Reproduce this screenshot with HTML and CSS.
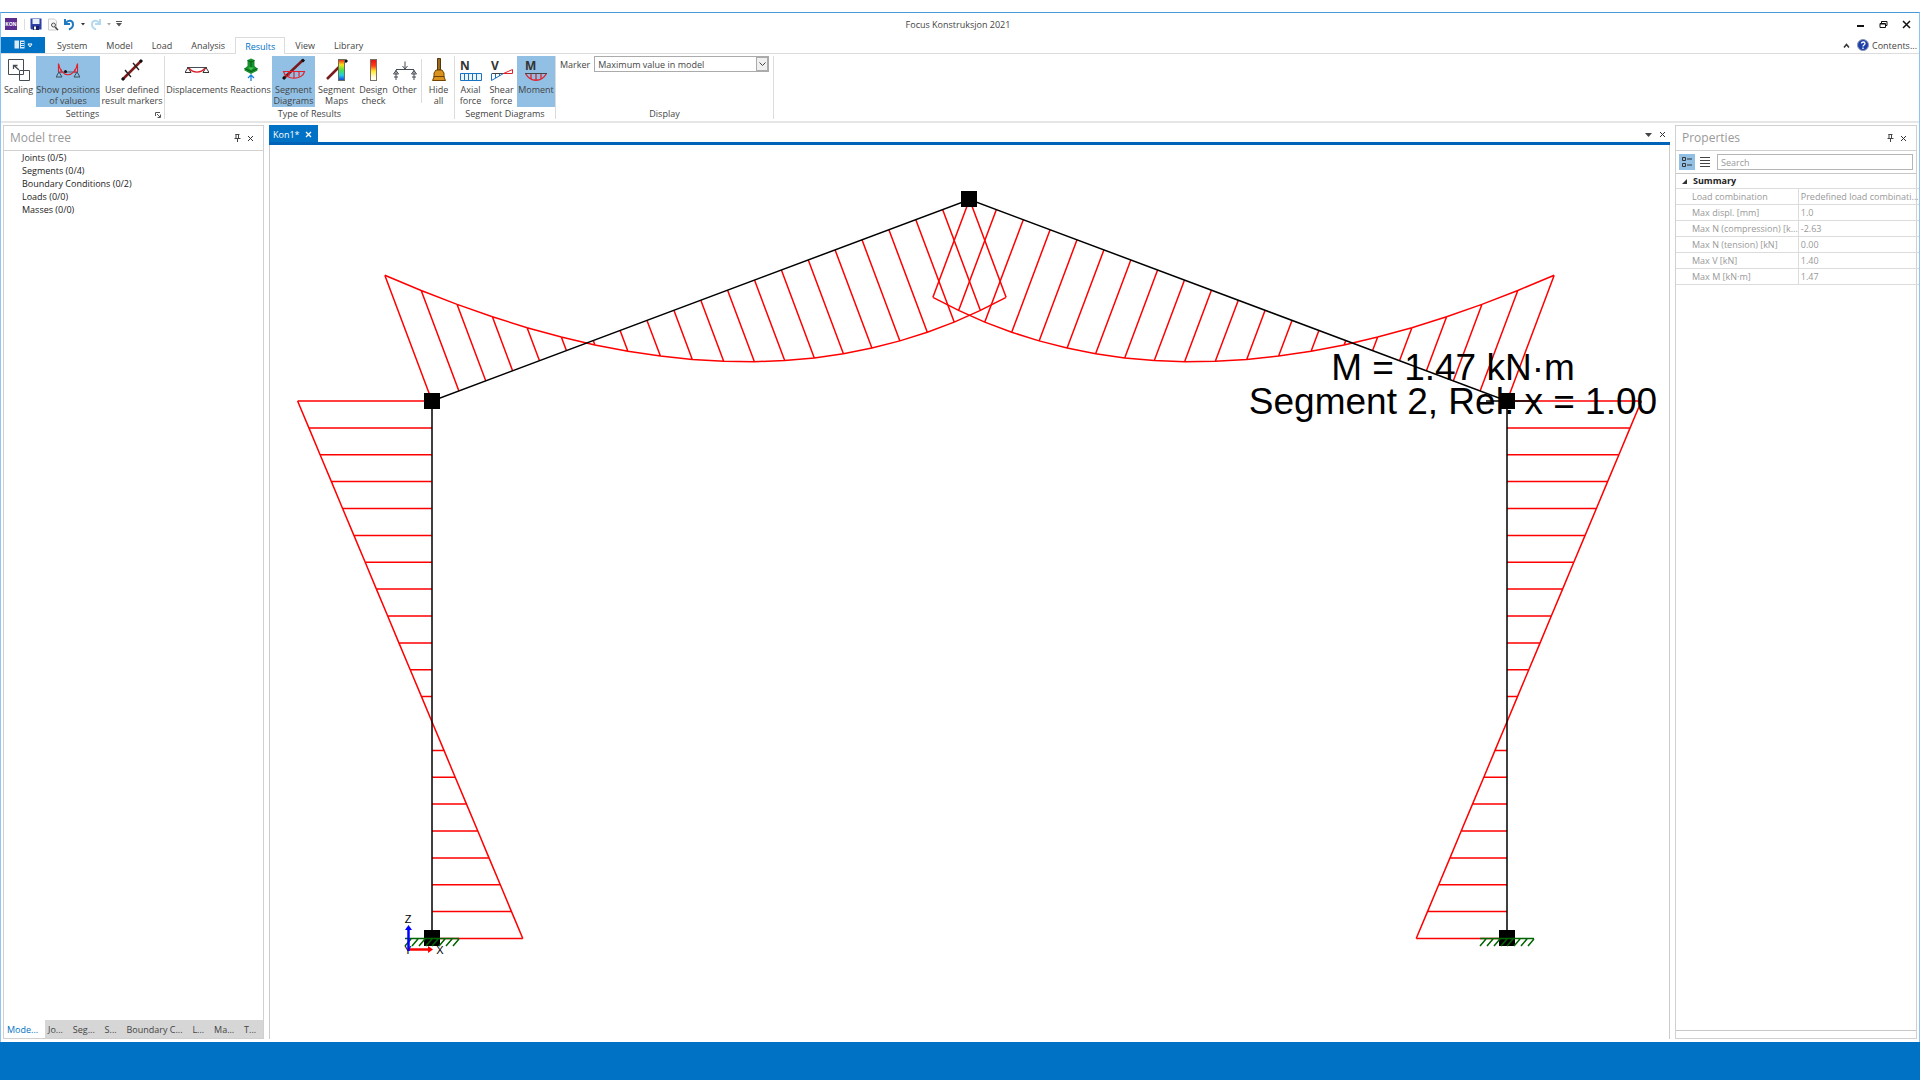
FILE: index.html
```html
<!DOCTYPE html>
<html lang="en">
<head>
    <meta charset="UTF-8">
    <meta name="viewport" content="width=device-width, initial-scale=1.0">
    <title>Focus Konstruksjon 2021</title>
    <link rel="stylesheet" href="styles.css">
</head>
<body>
    <div class="window">
        <header class="titlebar">
            <div class="quick">
                <span class="logo">KON</span>
                <span class="quick-sep"></span>
                <button type="button" aria-label="Save"><svg width="12" height="12" viewBox="0 0 12 12"><path d="M0.5 0.5h11v11h-10l-1-1z" fill="#2b3fa5"/><rect x="2.5" y="1" width="7" height="5" fill="#e8edfa"/><rect x="3" y="8" width="6" height="4" fill="#1a2360"/><rect x="4" y="8.5" width="2" height="3" fill="#fff"/></svg></button>
                <button type="button" aria-label="Print preview"><svg width="12" height="13" viewBox="0 0 12 13"><path d="M1.5 12V1h6l2 2v9z" fill="#fafafa" stroke="#ccc"/><circle cx="6.5" cy="7" r="2" fill="#e9eef2" stroke="#555"/><path d="M8 9l3 3" stroke="#444" stroke-width="1.5"/></svg></button>
                <button type="button" aria-label="Undo"><svg width="12" height="13" viewBox="0 0 12 13"><path d="M1 1v5h5M1.5 5.5C4 1.5 9 2 9 6.5c0 2.5-1.5 4-4 5" fill="none" stroke="#1f7ac2" stroke-width="2"/></svg></button>
                <svg width="4" height="3" viewBox="0 0 4 3"><path d="M0 0h4l-2 2.5z" fill="#333"/></svg>
                <button type="button" class="redo" aria-label="Redo"><svg width="12" height="13" viewBox="0 0 12 13"><path d="M10 1v5H5M9.5 5.5C7 1.5 2 2 2 6.5c0 2.5 1.5 4 4 5" fill="none" stroke="#b5d9ee" stroke-width="2"/></svg></button>
                <svg width="4" height="3" viewBox="0 0 4 3"><path d="M0 0h4l-2 2.5z" fill="#aaa"/></svg>
                <svg width="6" height="6" viewBox="0 0 6 6"><path d="M0 0.5h6" stroke="#555"/><path d="M0 2h6l-3 3.5z" fill="#555"/></svg>
            </div>
            <h1>Focus Konstruksjon 2021</h1>
            <div class="window-buttons">
                <button type="button" aria-label="Minimize"><svg width="9" height="9" viewBox="0 0 9 9"><path d="M1 6h7" stroke="#111" stroke-width="2"/></svg></button>
                <button type="button" aria-label="Restore"><svg width="9" height="9" viewBox="0 0 9 9"><path d="M2.5 3V1.5h5.5v4H6.5M2.5 1.5h5.5" fill="none" stroke="#111"/><path d="M1 3.5h5.5v4H1z" fill="none" stroke="#111"/><path d="M1 4h5.5" stroke="#111"/></svg></button>
                <button type="button" aria-label="Close"><svg width="9" height="9" viewBox="0 0 9 9"><path d="M1 1l7 7M8 1l-7 7" stroke="#111" stroke-width="1.5"/></svg></button>
            </div>
        </header>

        <nav class="tabs">
            <button type="button" class="file-menu" aria-label="File"><svg width="19" height="10" viewBox="0 0 19 10"><rect x="0.5" y="0.5" width="10" height="8" fill="#dceaf7"/><path d="M5.5 0v9" stroke="#0072c6"/><path d="M7 2.5h3M7 4.5h3M7 6.5h3" stroke="#0072c6"/><path d="M14 4h4l-2 3z" fill="none" stroke="#fff"/></svg></button>
            <button type="button">System</button>
            <button type="button">Model</button>
            <button type="button">Load</button>
            <button type="button">Analysis</button>
            <button type="button" class="active">Results</button>
            <button type="button">View</button>
            <button type="button">Library</button>
            <div class="help">
                <svg width="7" height="5" viewBox="0 0 7 5"><path d="M1 4.5l2.5-3 2.5 3" fill="none" stroke="#333" stroke-width="1.5"/></svg>
                <svg width="12" height="12" viewBox="0 0 12 12"><circle cx="6" cy="6" r="5.5" fill="#1d3fa8" stroke="#8a96b5"/><path d="M4.5 4.5c0-2 3.5-2 3.5 0 0 1.5-2 1.5-2 3M6 8.5v1.5" fill="none" stroke="#fff" stroke-width="1.3"/></svg>
                <a href="#">Contents...</a>
            </div>
        </nav>

        <div class="ribbon">
            <section class="group">
                <div class="tools">
                    <button type="button" class="tool small"><svg width="24" height="24" viewBox="0 0 24 24"><g fill="none" stroke="#444b52"><path d="M1.5 1.5h15v15h-15z"/><path d="M12.5 12.5h10v10h-10z" fill="#fff"/><path d="M12.5 16.5h4v-4"/><path d="M12 12L7 7.5M6.5 11V7.5h4" stroke-width="1.3"/></g></svg>Scaling</button>
                    <button type="button" class="tool wide selected"><svg width="24" height="24" viewBox="0 0 24 24"><path d="M2 14h20" stroke="#4b6478"/><path d="M3 14l-3 5h6zM21 14l-3 5h6z" fill="none" stroke="#3c4d5b"/><path d="M2.5 14V5.500C5 20.500 19 20.500 21.500 5.500V14" fill="none" stroke="#e3202b" stroke-width="1.2"/><path d="M5 11v4M19 11v4" stroke="#e3202b"/><circle cx="9.5" cy="13.5" r="1.5" fill="#111"/></svg>Show positions<br>of values</button>
                    <button type="button" class="tool wide"><svg width="24" height="24" viewBox="0 0 24 24"><path d="M3 21L21 3" stroke="#7b1a1c" stroke-width="2.5"/><path d="M2 22l2-2M20 4l2-2" stroke="#111" stroke-width="3"/><path d="M5 12l6 7M13 5l6 7" stroke="#222" stroke-width="1.3"/></svg>User defined<br>result markers</button>
                </div>
                <h2>Settings</h2>
                <svg class="launcher" width="6" height="6" viewBox="0 0 6 6"><path d="M0.5 4V0.5H5M2 2l3 3M5.5 2.5v3h-3" fill="none" stroke="#555"/></svg>
            </section>
            <section class="group">
                <div class="tools">
                    <button type="button" class="tool wide"><svg width="24" height="24" viewBox="0 0 24 24"><path d="M2 9.500h20" stroke="#444b52"/><path d="M3 9.500l-3 5h6zM21 9.500l-3 5h6z" fill="none" stroke="#333"/><path d="M4 10c4 5.500 12 5.500 16 0" fill="none" stroke="#d81e26" stroke-width="1.3"/></svg>Displacements</button>
                    <button type="button" class="tool standard"><svg width="24" height="24" viewBox="0 0 24 24"><path d="M8.500 2l3.500-1.500L15.500 2v6l3 2.500v2L12 16l-6.500-3.500v-2l3-2.500z" fill="#18902c"/><path d="M8.500 2.500L12 4l3.500-1.500M5.500 10.500L12 13.500l6.500-3M12 4v5" fill="none" stroke="#075d16"/><path d="M9 9.500h6L12 12z" fill="#42cb52"/><path d="M12 23v-6M9 20l3-3 3 3" fill="none" stroke="#1683db" stroke-width="1.3"/></svg>Reactions</button>
                    <button type="button" class="tool standard selected"><svg width="24" height="24" viewBox="0 0 24 24"><path d="M2 20L21 2" stroke="#7b1a1c" stroke-width="2.5"/><path d="M1 21l2-2M20 3.500l2-2" stroke="#111" stroke-width="3"/><path d="M1.500 13.500h21c-2 9-19 9-21 0zM7 13.500v5M12 13.500v6.500M17 13.500v5" fill="none" stroke="#e3202b" stroke-width="1.2"/></svg>Segment<br>Diagrams</button>
                    <button type="button" class="tool standard"><svg width="24" height="24" viewBox="0 0 24 24"><defs><linearGradient id="rainbow" x2="0" y2="1"><stop offset="0" stop-color="#f01919"/><stop offset=".25" stop-color="#ffe11a"/><stop offset=".5" stop-color="#4ce345"/><stop offset=".75" stop-color="#20cfe8"/><stop offset="1" stop-color="#1836dc"/></linearGradient></defs><path d="M2 21L20 3" stroke="#7b1a1c" stroke-width="2.5"/><path d="M20 4l2-2" stroke="#111" stroke-width="3"/><rect x="13.5" y="1.5" width="6" height="21" fill="url(#rainbow)" stroke="#65705f"/></svg>Segment<br>Maps</button>
                    <button type="button" class="tool narrow"><svg width="24" height="24" viewBox="0 0 24 24"><defs><linearGradient id="heat" x2="0" y2="1"><stop offset="0" stop-color="#e60f14"/><stop offset=".3" stop-color="#ff3d12"/><stop offset=".55" stop-color="#ffe72c"/><stop offset=".85" stop-color="#fffde3"/></linearGradient></defs><rect x="8.5" y="1.5" width="6" height="21" fill="url(#heat)" stroke="#77706a"/></svg>Design<br>check</button>
                    <button type="button" class="tool narrow"><svg width="24" height="24" viewBox="0 0 24 24"><path d="M3 11.500h18M12 3.500v7M9.500 8l2.500 3 2.500-3M3 12v10M21 12v10M0.500 16L3 12.500 5.500 16zM18.500 16l2.500-3.500 2.500 3.500zM1 19h4M19 19h4" fill="none" stroke="#444b52"/></svg>Other</button>
                    <span class="tool-sep"></span>
                    <button type="button" class="tool narrow"><svg width="24" height="24" viewBox="0 0 24 24"><path d="M10.5 0.5h3V12h-3z" fill="#9b6a1d" stroke="#51370d"/><path d="M9 12h6l2 3v4l1.5 3.5h-13L7 19v-4z" fill="#d8921d" stroke="#704400"/><path d="M6.5 18.5h11" stroke="#704400"/></svg>Hide<br>all</button>
                </div>
                <h2>Type of Results</h2>
            </section>
            <section class="group">
                <div class="tools">
                    <button type="button" class="tool narrow"><svg width="24" height="24" viewBox="0 0 24 24"><text class="icon-letter" x="1" y="12">N</text><path d="M1.5 15.5h21v7h-21zM5.5 15v7M9.5 15v7M13.5 15v7M17.5 15v7" fill="#edf5fb" stroke="#1a73c2"/></svg>Axial<br>force</button>
                    <button type="button" class="tool narrow"><svg width="24" height="24" viewBox="0 0 24 24"><text class="icon-letter" x="1" y="12">V</text><path d="M2 15.5h20" stroke="#444"/><path d="M1.5 15.5v7l12-7M5.5 16v4M9.5 16v2" fill="none" stroke="#1a73c2"/><path d="M13.5 15.5l9-4v4z" fill="none" stroke="#e02028"/></svg>Shear<br>force</button>
                    <button type="button" class="tool medium selected"><svg width="24" height="24" viewBox="0 0 24 24"><text class="icon-letter" x="1" y="12">M</text><path d="M1.5 15.5c5 9 16 9 21 0M7 15.5v5M12 15.5v7M17 15.5v5" fill="none" stroke="#e3202b" stroke-width="1.3"/><path d="M1 15.5h22" stroke="#444"/></svg>Moment</button>
                </div>
                <h2>Segment Diagrams</h2>
            </section>
            <section class="group display">
                <div class="marker">
                    <label for="marker">Marker</label>
                    <div class="select-wrap">
                        <select id="marker"><option>Maximum value in model</option></select>
                        <span class="arrow"><svg width="7" height="5" viewBox="0 0 7 5"><path d="M0.5 0.5l3 3 3-3" fill="none" stroke="#444"/></svg></span>
                    </div>
                </div>
                <h2>Display</h2>
            </section>
        </div>

        <main class="workspace">
            <aside class="panel tree">
                <div class="panel-head">
                    <h2>Model tree</h2>
                    <button type="button" aria-label="Pin"><svg width="7" height="8" viewBox="0 0 7 8"><path d="M2 0v4.500M4.500 0v4.500M1.500 0.500h4M0.500 4.500h6M3.500 5v3" fill="none" stroke="#444"/></svg></button>
                    <button type="button" aria-label="Close"><svg width="7" height="7" viewBox="0 0 7 7"><path d="M1 1l5 5M6 1l-5 5" stroke="#333"/></svg></button>
                </div>
                <ul class="tree-list">
                    <li>Joints (0/5)</li>
                    <li>Segments (0/4)</li>
                    <li>Boundary Conditions (0/2)</li>
                    <li>Loads (0/0)</li>
                    <li>Masses (0/0)</li>
                </ul>
                <nav class="tree-tabs">
                    <button type="button" class="active">Mode...</button>
                    <button type="button">Jo...</button>
                    <button type="button">Seg...</button>
                    <button type="button">S...</button>
                    <button type="button">Boundary C...</button>
                    <button type="button">L...</button>
                    <button type="button">Ma...</button>
                    <button type="button">T...</button>
                </nav>
            </aside>

            <section class="document">
                <div class="doc-tabs">
                    <button type="button" class="doc-tab">Kon1* <svg width="7" height="7" viewBox="0 0 7 7"><path d="M1 1l5 5M6 1l-5 5" stroke="#fff" stroke-width="1.3"/></svg></button>
                    <div class="doc-actions">
                        <svg width="7" height="4" viewBox="0 0 7 4"><path d="M0 0h7l-3.500 4z" fill="#444"/></svg>
                        <button type="button" aria-label="Close"><svg width="7" height="7" viewBox="0 0 7 7"><path d="M1 1l5 5M6 1l-5 5" stroke="#333"/></svg></button>
                    </div>
                </div>
                <div class="canvas">
                    <svg class="drawing" viewBox="270 145 1399 894">
                        <!-- moment diagrams, filled in by script.js -->
                        <g id="diagrams" class="moment"></g>
                        <path class="member" d="M432 938V401L969.500 199.500 1507 401V938"/>
                        <text class="result" x="1453" y="380">M = 1.47 kN·m</text>
                        <text class="result" x="1453" y="414">Segment 2, Rel. x = 1.00</text>
                        <path class="member" d="M1486 401h51"/>
                        <g>
                            <rect x="424" y="393" width="16" height="16"/>
                            <rect x="961" y="191" width="16" height="16"/>
                            <rect x="1499" y="393" width="16" height="16"/>
                            <rect x="424" y="930" width="16" height="16"/>
                            <rect x="1499" y="930" width="16" height="16"/>
                        </g>
                        <path id="support" class="support" d="M405 938.500h54M411 939l-6 7M418 939l-6 7M425 939l-6 7M432 939l-6 7M438 939l-6 7M445 939l-6 7M452 939l-6 7M459 939l-6 7"/>
                        <use href="#support" x="1075"/>
                        <text class="axis" x="408" y="954">Y</text>
                        <path d="M409 949.500h20" stroke="#f00" stroke-width="2.5"/>
                        <path d="M428 946l5 3.500-5 3.500z" fill="#f00"/>
                        <path d="M408.500 951v-22" stroke="#00f" stroke-width="2.5"/>
                        <path d="M405 930l3.500-5 3.500 5z" fill="#00f"/>
                        <text class="axis" x="408" y="923">Z</text>
                        <text class="axis" x="440" y="954">X</text>
                    </svg>
                </div>
            </section>

            <aside class="panel properties">
                <div class="panel-head">
                    <h2>Properties</h2>
                    <button type="button" aria-label="Pin"><svg width="7" height="8" viewBox="0 0 7 8"><path d="M2 0v4.500M4.500 0v4.500M1.500 0.500h4M0.500 4.500h6M3.500 5v3" fill="none" stroke="#444"/></svg></button>
                    <button type="button" aria-label="Close"><svg width="7" height="7" viewBox="0 0 7 7"><path d="M1 1l5 5M6 1l-5 5" stroke="#333"/></svg></button>
                </div>
                <div class="prop-tools">
                    <button type="button" class="selected" aria-label="Categorized"><svg width="10" height="10" viewBox="0 0 10 10"><path d="M0.5 0.5h3v3h-3zM0.5 6.500h3v3h-3zM5 2h5M5 8h5" fill="none" stroke="#333"/></svg></button>
                    <button type="button" aria-label="List"><svg width="10" height="10" viewBox="0 0 10 10"><path d="M0 0.5h10M0 3.500h10M0 6.500h10M0 9.500h10" stroke="#444"/></svg></button>
                    <input type="text" placeholder="Search" aria-label="Search">
                </div>
                <table class="prop-table">
                    <thead>
                        <tr><th colspan="2"><svg width="5" height="5" viewBox="0 0 5 5"><path d="M5 0v5H0z" fill="#333"/></svg>Summary</th></tr>
                    </thead>
                    <tbody>
                        <tr><td>Load combination</td><td>Predefined load combinati...</td></tr>
                        <tr><td>Max displ. [mm]</td><td>1.0</td></tr>
                        <tr><td>Max N (compression) [k...</td><td>-2.63</td></tr>
                        <tr><td>Max N (tension) [kN]</td><td>0.00</td></tr>
                        <tr><td>Max V [kN]</td><td>1.40</td></tr>
                        <tr><td>Max M [kN·m]</td><td>1.47</td></tr>
                    </tbody>
                </table>
                <div class="prop-foot"></div>
            </aside>
        </main>
        <footer class="statusbar"></footer>
    </div>
    <script src="script.js"></script>
</body>
</html>
```
FILE: styles.css
```css
* {
    box-sizing: border-box;
}

body {
    margin: 0;
    height: 100vh;
    padding-top: 12px;
    background: #fff;
    color: #444;
    font-family: "Open Sans", "Noto Sans", sans-serif;
    font-size: 9px;
    line-height: 11px;
}

h1, h2 {
    margin: 0;
    font-size: 9px;
    font-weight: normal;
}

button {
    margin: 0;
    padding: 0;
    border: none;
    background: none;
    color: inherit;
    font: inherit;
}

svg {
    flex-shrink: 0;
}

.window {
    display: flex;
    flex-direction: column;
    height: 100%;
    border: 1px solid #8cc4f5;
    border-top-color: #4a9adb;
    border-bottom: none;
}

/* title bar */
.titlebar {
    display: grid;
    grid-template-columns: 1fr auto 1fr;
    align-items: center;
    height: 24px;
    padding: 0 8px 2px 4px;
    flex-shrink: 0;
}

.titlebar svg {
    display: block;
}

.quick {
    display: flex;
    align-items: center;
    gap: 5px;
}

.logo {
    width: 12px;
    height: 12px;
    background: #5c2d91;
    color: #fff;
    font-size: 5px;
    font-weight: bold;
    line-height: 12px;
    text-align: center;
}

.quick-sep {
    width: 1px;
    height: 11px;
    margin-left: 2px;
    background: #ddd;
}

.window-buttons {
    display: flex;
    justify-content: flex-end;
    gap: 14px;
}

/* ribbon tabs */
.tabs {
    display: flex;
    gap: 1px;
    height: 17px;
    flex-shrink: 0;
    border-bottom: 1px solid #dcdcdc;
}

.tabs button {
    padding: 0 9px;
}

.tabs .file-menu {
    display: flex;
    align-items: center;
    justify-content: center;
    width: 44px;
    margin-right: 2px;
    padding: 0;
    background: #0072c6;
}

.tabs .active {
    height: 17px;
    border: 1px solid #dcdcdc;
    border-bottom: none;
    background: #fff;
    color: #0072c6;
}

.help {
    display: flex;
    align-items: center;
    gap: 7px;
    margin-left: auto;
    padding-right: 2px;
}

.help a {
    margin-left: -4px;
    color: #444;
    text-decoration: none;
}

/* ribbon */
.ribbon {
    display: flex;
    height: 69px;
    flex-shrink: 0;
    padding: 2px 0;
    border-bottom: 2px solid #e6e6e6;
}

.group {
    position: relative;
    display: flex;
    flex-direction: column;
    justify-content: space-between;
    border-right: 1px solid #dcdcdc;
}

.group h2 {
    text-align: center;
}

.launcher {
    position: absolute;
    right: 3px;
    bottom: 1px;
}

.tools {
    display: flex;
    height: 51px;
}

.tool {
    display: flex;
    flex-direction: column;
    align-items: center;
    padding-top: 2px;
    white-space: nowrap;
}

.tool svg {
    margin-bottom: 2px;
}

.wide {
    width: 64px;
}

.standard {
    width: 43px;
}

.medium {
    width: 38px;
}

.small {
    width: 35px;
}

.narrow {
    width: 31px;
}

.selected {
    background: #91c0e4;
}

.tool-sep {
    width: 1px;
    height: 44px;
    margin: 3px 1px;
    background: #dcdcdc;
}

.icon-letter {
    font: bold 12px "Open Sans", sans-serif;
    fill: #333;
}

.display {
    width: 218px;
}

.marker {
    display: flex;
    align-items: center;
    gap: 4px;
    padding: 0 4px;
}

.select-wrap {
    position: relative;
    flex: 1;
}

.marker select {
    display: block;
    width: 100%;
    height: 16px;
    padding: 0 3px;
    appearance: none;
    border: 1px solid #ababab;
    border-radius: 0;
    background: #fff;
    color: #444;
    font: inherit;
}

.arrow {
    position: absolute;
    top: 1px;
    right: 1px;
    bottom: 1px;
    display: flex;
    align-items: center;
    justify-content: center;
    width: 12px;
    border: 1px solid #ababab;
    background: #f0f0f0;
    pointer-events: none;
}

/* workspace */
.workspace {
    display: flex;
    flex: 1;
    min-height: 0;
    gap: 5px;
    padding: 2px 2px 3px;
}

.panel {
    display: flex;
    flex-direction: column;
    border: 1px solid #d0d0d0;
}

.tree {
    width: 261px;
}

.properties {
    width: 242px;
}

.panel-head {
    display: flex;
    align-items: center;
    gap: 6px;
    height: 25px;
    flex-shrink: 0;
    padding: 0 9px 0 6px;
    border-bottom: 1px solid #d0d0d0;
}

.panel-head h2 {
    flex: 1;
    color: #999;
    font-size: 12px;
    line-height: 16px;
}

.panel-head svg {
    display: block;
}

.tree-list {
    flex: 1;
    margin: 0;
    padding: 0 0 0 18px;
    list-style: none;
    color: #222;
    line-height: 13px;
}

.tree-tabs {
    display: flex;
    height: 18px;
    background: #d6d6d6;
}

.tree-tabs button {
    flex: auto;
    text-align: left;
    padding-left: 3px;
}

.tree-tabs .active {
    background: #fff;
    color: #0072c6;
}

/* document */
.document {
    display: flex;
    flex-direction: column;
    flex: 1;
    min-width: 0;
}

.doc-tabs {
    display: flex;
    justify-content: space-between;
    height: 20px;
    flex-shrink: 0;
    border-bottom: 3px solid #0063b8;
}

.doc-tab {
    display: flex;
    align-items: center;
    gap: 5px;
    padding: 2px 6px 0 4px;
    background: #0072c6;
    color: #fff;
}

.doc-actions {
    display: flex;
    align-items: center;
    gap: 7px;
    padding: 2px 4px 0 0;
}

.doc-actions svg {
    display: block;
}

.canvas {
    flex: 1;
    min-height: 0;
    border: 1px solid #ccc;
    border-width: 0 1px;
}

.drawing {
    display: block;
    width: 100%;
    height: 100%;
}

.moment {
    fill: none;
    stroke: #f00;
    stroke-width: 1.5;
}

.member {
    fill: none;
    stroke: #000;
    stroke-width: 1.5;
}

.support {
    fill: none;
    stroke: #006400;
    stroke-width: 1.5;
}

.result {
    font: 37px "Liberation Sans", Arial, sans-serif;
    text-anchor: middle;
}

.axis {
    font: 11px "Liberation Sans", Arial, sans-serif;
    text-anchor: middle;
}

/* properties */
.prop-tools {
    display: flex;
    gap: 2px;
    height: 23px;
    flex-shrink: 0;
    padding: 3px;
    border-bottom: 1px solid #c8c8c8;
}

.prop-tools button {
    display: flex;
    align-items: center;
    justify-content: center;
    width: 16px;
    height: 16px;
}

.prop-tools input {
    flex: 1;
    min-width: 0;
    height: 16px;
    margin-left: 2px;
    padding: 0 3px;
    border: 1px solid #b5b5b5;
    font: inherit;
}

.prop-tools input::placeholder {
    color: #999;
}

.prop-table {
    width: 100%;
    border-collapse: collapse;
}

.prop-table th {
    height: 14px;
    padding: 0 6px;
    color: #222;
    text-align: left;
}

.prop-table th svg {
    margin-right: 6px;
}

.prop-table td {
    height: 16px;
    padding: 0 0 0 2px;
    border: 1px solid #dcdcdc;
    border-width: 1px 0;
    color: #999;
    white-space: nowrap;
}

.prop-table td:first-child {
    padding-left: 16px;
    border-right-width: 1px;
}

.prop-foot {
    height: 8px;
    margin-top: auto;
    border-top: 1px solid #c8c8c8;
}

.statusbar {
    height: 38px;
    flex-shrink: 0;
    margin: 0 -1px;
    background: #0072c6;
}
```
FILE: script.js
```js
const STEPS = 20;
const group = document.getElementById('diagrams');

// draws the moment diagram of one segment, hatched at regular stations
function drawDiagram(x1, y1, x2, y2, moment) {
    const length = Math.hypot(x2 - x1, y2 - y1);
    const nx = (y2 - y1) / length;
    const ny = -(x2 - x1) / length;
    let hatch = '';
    const curve = [];

    for (let i = 0; i <= STEPS; i++) {
        const t = i / STEPS;
        const x = x1 + (x2 - x1) * t;
        const y = y1 + (y2 - y1) * t;
        const m = moment(t);
        const px = (x + nx * m).toFixed(1);
        const py = (y + ny * m).toFixed(1);
        hatch += `M${x.toFixed(1)} ${y.toFixed(1)}L${px} ${py}`;
        curve.push(px + ' ' + py);
    }

    const path = document.createElementNS('http://www.w3.org/2000/svg', 'path');
    path.setAttribute('d', hatch + 'M' + curve.join('L'));
    group.appendChild(path);
}

const column = t => 134.4 - 225.2 * t;
const rafter = t => 134.4 - 559.8 * t + 321 * t * t;

drawDiagram(432, 401, 432, 938.5, t => -column(t));
drawDiagram(1507, 401, 1507, 938.5, column);
drawDiagram(432, 401, 969.5, 199.5, rafter);
drawDiagram(1507, 401, 969.5, 199.5, t => -rafter(t));
```
